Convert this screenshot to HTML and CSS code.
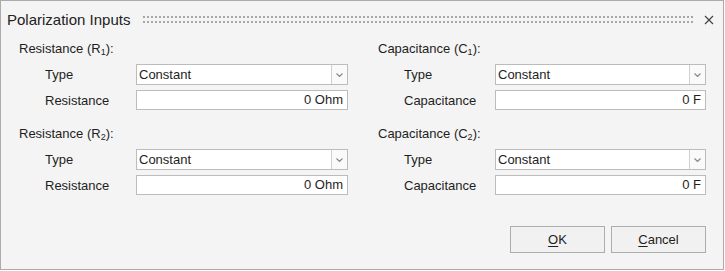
FILE: index.html
```html
<!DOCTYPE html>
<html>
<head>
<meta charset="utf-8">
<link rel="stylesheet" href="styles.css">
</head>
<body>
<div class="dialog">
  <div class="header">
    <span class="title">Polarization Inputs</span>
    <div class="grip"></div>
    <svg class="close" width="10" height="10" viewBox="0 0 10 10"><path d="M1 1 L9 9 M9 1 L1 9" stroke="#444" stroke-width="1.2" fill="none"/></svg>
  </div>
  <div class="body">
    <div class="group">
      <div class="heading">Resistance (R<sub>1</sub>):</div>
      <div class="row"><span class="label">Type</span><div class="select"><span class="sel-text">Constant</span><span class="arrow"><svg width="7" height="4" viewBox="0 0 7 4"><path d="M0.5 0.5 L3.5 3.5 L6.5 0.5" stroke="#8a8a8a" stroke-width="1.2" fill="none"/></svg></span></div></div>
      <div class="row"><span class="label">Resistance</span><div class="input">0 Ohm</div></div>
    </div>
    <div class="group">
      <div class="heading">Capacitance (C<sub>1</sub>):</div>
      <div class="row"><span class="label">Type</span><div class="select"><span class="sel-text">Constant</span><span class="arrow"><svg width="7" height="4" viewBox="0 0 7 4"><path d="M0.5 0.5 L3.5 3.5 L6.5 0.5" stroke="#8a8a8a" stroke-width="1.2" fill="none"/></svg></span></div></div>
      <div class="row"><span class="label">Capacitance</span><div class="input">0 F</div></div>
    </div>
    <div class="group">
      <div class="heading">Resistance (R<sub>2</sub>):</div>
      <div class="row"><span class="label">Type</span><div class="select"><span class="sel-text">Constant</span><span class="arrow"><svg width="7" height="4" viewBox="0 0 7 4"><path d="M0.5 0.5 L3.5 3.5 L6.5 0.5" stroke="#8a8a8a" stroke-width="1.2" fill="none"/></svg></span></div></div>
      <div class="row"><span class="label">Resistance</span><div class="input">0 Ohm</div></div>
    </div>
    <div class="group">
      <div class="heading">Capacitance (C<sub>2</sub>):</div>
      <div class="row"><span class="label">Type</span><div class="select"><span class="sel-text">Constant</span><span class="arrow"><svg width="7" height="4" viewBox="0 0 7 4"><path d="M0.5 0.5 L3.5 3.5 L6.5 0.5" stroke="#8a8a8a" stroke-width="1.2" fill="none"/></svg></span></div></div>
      <div class="row"><span class="label">Capacitance</span><div class="input">0 F</div></div>
    </div>
  </div>
  <div class="footer">
    <button class="btn"><u>O</u>K</button>
    <button class="btn"><u>C</u>ancel</button>
  </div>
</div>
</body>
</html>
```
FILE: styles.css
```css
html, body {
  margin: 0;
  padding: 0;
  background: #ffffff;
}
.dialog {
  width: 724px;
  height: 270px;
  box-sizing: border-box;
  border: 1px solid #ababab;
  background: #f4f4f4;
  font-family: "Liberation Sans", Arial, sans-serif;
  font-size: 13px;
  color: #1e1e1e;
  display: flex;
  flex-direction: column;
}
.header {
  height: 36px;
  display: flex;
  align-items: center;
  padding-left: 6px;
  padding-right: 9px;
}
.title {
  font-size: 15px;
  color: #222;
  white-space: nowrap;
}
.grip {
  flex: 1;
  height: 7px;
  margin-left: 13px;
  margin-right: 10px;
  margin-top: 1px;
  background-image: conic-gradient(at 2px 2px, transparent 75%, #a6a6a6 0);
  background-size: 4px 5px;
}
.close {
  display: block;
  margin-top: 1px;
}
.body {
  display: grid;
  grid-template-columns: 329px 328px;
  column-gap: 30px;
  row-gap: 16px;
  padding-left: 18px;
  padding-top: 4px;
}
.group {
  display: flex;
  flex-direction: column;
  gap: 5px;
}
.heading {
  height: 16px;
  line-height: 16px;
  margin-bottom: 2px;
  white-space: nowrap;
}
.heading sub {
  font-size: 9px;
  vertical-align: -2px;
  line-height: 0;
}
.row {
  display: flex;
  align-items: center;
  padding-left: 26px;
}
.label {
  width: 91px;
  flex: none;
}
.select {
  flex: 1;
  height: 21px;
  box-sizing: border-box;
  border: 1px solid #bcbcbc;
  background: #fff;
  display: flex;
  align-items: center;
}
.sel-text {
  flex: 1;
  padding-left: 2px;
}
.arrow {
  width: 15px;
  height: 100%;
  border-left: 1px solid #d0d0d0;
  display: flex;
  align-items: center;
  justify-content: center;
  background: #fafafa;
}
.arrow svg {
  display: block;
}
.input {
  flex: 1;
  height: 20px;
  box-sizing: border-box;
  border: 1px solid #bcbcbc;
  background: #fff;
  text-align: right;
  line-height: 18px;
  padding-right: 4px;
}
.footer {
  display: flex;
  justify-content: flex-end;
  gap: 6px;
  padding-right: 17px;
  margin-top: 31px;
}
.btn {
  width: 95px;
  height: 27px;
  box-sizing: border-box;
  border: 1px solid #adadad;
  background: #f1f1f1;
  font-family: "Liberation Sans", Arial, sans-serif;
  font-size: 13px;
  color: #1e1e1e;
  padding: 0;
}
.btn u {
  text-underline-offset: 2px;
}
```
